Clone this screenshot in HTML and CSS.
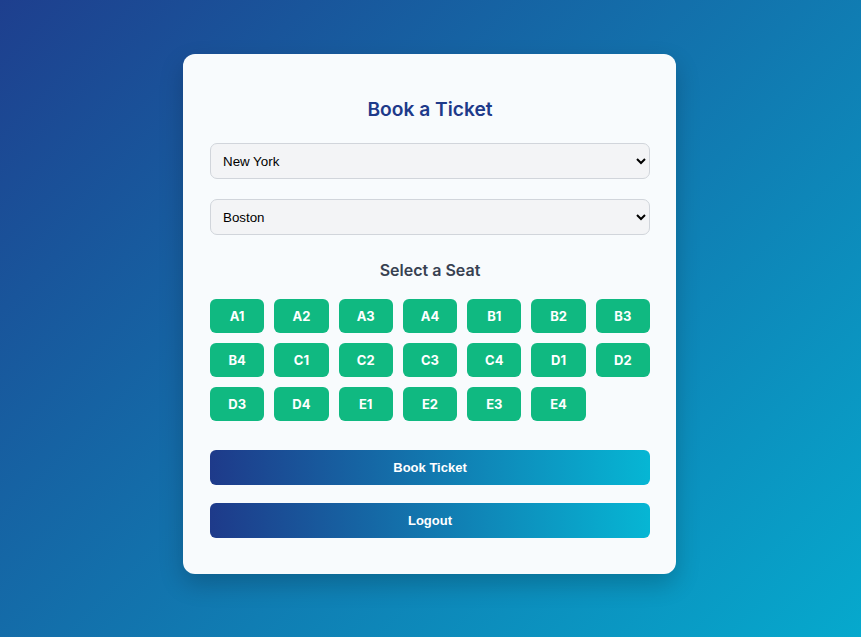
FILE: index.html
```html
<!DOCTYPE html>
<html>
<head>
<meta charset="utf-8">
<link rel="stylesheet" href="styles.css">
</head>
<body>
<div class="card">
  <h2 class="title">Book a Ticket</h2>
  <select class="field">
    <option>New York</option>
  </select>
  <select class="field">
    <option>Boston</option>
  </select>
  <h3 class="subtitle">Select a Seat</h3>
  <div class="seats">
    <button class="seat">A1</button>
    <button class="seat">A2</button>
    <button class="seat">A3</button>
    <button class="seat">A4</button>
    <button class="seat">B1</button>
    <button class="seat">B2</button>
    <button class="seat">B3</button>
    <button class="seat">B4</button>
    <button class="seat">C1</button>
    <button class="seat">C2</button>
    <button class="seat">C3</button>
    <button class="seat">C4</button>
    <button class="seat">D1</button>
    <button class="seat">D2</button>
    <button class="seat">D3</button>
    <button class="seat">D4</button>
    <button class="seat">E1</button>
    <button class="seat">E2</button>
    <button class="seat">E3</button>
    <button class="seat">E4</button>
  </div>
  <button class="action">Book Ticket</button>
  <button class="action">Logout</button>
</div>
</body>
</html>
```
FILE: styles.css
```css
html, body {
  margin: 0;
  height: 100%;
}
body {
  background: linear-gradient(135deg, #1e3f8e 0%, #06a9cd 100%);
  font-family: Inter, "Liberation Sans", sans-serif;
  padding: 54px 2px 0 0;
  box-sizing: border-box;
}
.card {
  width: 493px;
  box-sizing: border-box;
  margin: 0 auto;
  background: #f8fbfd;
  border-radius: 12px;
  padding: 27px 26px 36px 27px;
  box-shadow: 0 10px 25px rgba(0, 0, 0, 0.2);
  display: flex;
  flex-direction: column;
}
.title {
  margin: 16px 0 22px;
  font-size: 19.2px;
  line-height: 24px;
  font-weight: 600;
  color: #1e3a8a;
  text-align: center;
}
.field {
  height: 36px;
  width: 100%;
  box-sizing: border-box;
  background: #f3f4f6;
  border: 1px solid #d1d5db;
  border-radius: 7px;
  padding: 0 8px;
  font-family: "Liberation Sans", Arial, sans-serif;
  font-size: 13.33px;
  color: #000;
  margin: 0 0 20px;
}
.subtitle {
  margin: 5px 0 19px;
  font-size: 16px;
  line-height: 20px;
  font-weight: 600;
  color: #374151;
  text-align: center;
}
.seats {
  display: grid;
  grid-template-columns: repeat(7, 1fr);
  gap: 10px;
  margin-bottom: 29px;
}
.seat {
  height: 34px;
  border: none;
  border-radius: 6px;
  background: #10b981;
  color: #fff;
  font-family: Inter, "Liberation Sans", sans-serif;
  font-size: 13px;
  font-weight: 700;
  padding: 0;
}
.action {
  height: 34.5px;
  border: none;
  border-radius: 6px;
  background: linear-gradient(90deg, #1e3a8a 0%, #06b6d4 100%);
  color: #fff;
  font-family: "Liberation Sans", Arial, sans-serif;
  font-size: 13px;
  font-weight: 700;
  margin-bottom: 18.5px;
}
.action:last-child {
  margin-bottom: 0;
}
```
